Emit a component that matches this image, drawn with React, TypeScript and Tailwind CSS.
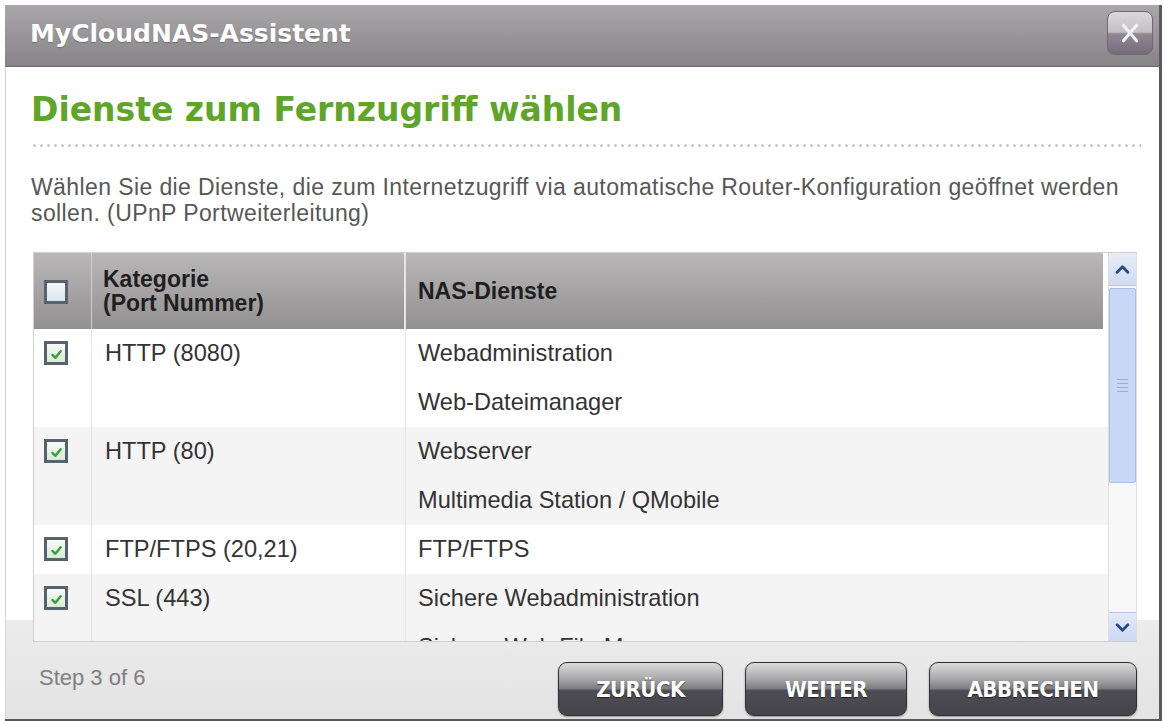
import type { ReactElement } from 'react';

const UI = { fontFamily: '"Liberation Sans", Arial, sans-serif' };
const HEAD = { fontFamily: '"DejaVu Sans", Verdana, sans-serif' };
const BTN = { fontFamily: '"Liberation Sans Narrow", "DejaVu Sans Condensed", "Liberation Sans", Arial, sans-serif' };

type Row = { cat: string; services: string[]; bg: string };

const ROWS: Row[] = [
  { cat: 'HTTP (8080)', services: ['Webadministration', 'Web-Dateimanager'], bg: 'bg-white' },
  { cat: 'HTTP (80)', services: ['Webserver', 'Multimedia Station / QMobile'], bg: 'bg-[#f4f4f4]' },
  { cat: 'FTP/FTPS (20,21)', services: ['FTP/FTPS'], bg: 'bg-white' },
  { cat: 'SSL (443)', services: ['Sichere Webadministration', 'Sichere Web File Manager'], bg: 'bg-[#f4f4f4]' },
];

function CheckBox({ checked }: { checked?: boolean }): ReactElement {
  return (
    <span
      className={`flex h-[24px] w-[24px] items-center justify-center border-[3px] border-[#56636d] ${
        checked ? 'bg-[linear-gradient(to_bottom,#f7fbf7,#d8ebd8)]' : 'bg-[linear-gradient(to_bottom,#f4f8fb,#dbe4ec)]'
      }`}
    >
      {checked && (
        <svg viewBox="0 0 14 14" className="mt-[2px] h-[13px] w-[13px]">
          <path d="M2.5 7.5 L5.8 10.5 L11.5 3.5" fill="none" stroke="#37a037" strokeWidth="2.6" strokeLinecap="round" strokeLinejoin="round" />
        </svg>
      )}
    </span>
  );
}

function NavButton({ label, width }: { label: string; width: string }): ReactElement {
  return (
    <button
      type="button"
      style={BTN}
      className={`${width} flex h-[54px] items-center justify-center rounded-[9px] border border-[#2f2f33] bg-[linear-gradient(to_bottom,#dcdcdc_0%,#a9a9ab_30%,#7c7c80_50%,#4d4d53_52%,#44444a_100%)] text-[22px] font-bold tracking-[-0.5px] text-white shadow-[0_1px_2px_rgba(0,0,0,0.35)] [text-shadow:0_1px_1px_rgba(0,0,0,0.6)]`}
    >
      {label}
    </button>
  );
}

function Chevron({ down }: { down?: boolean }): ReactElement {
  return (
    <svg viewBox="0 0 16 10" className="h-[9px] w-[15px]">
      <path d={down ? 'M2 2 L8 8 L14 2' : 'M2 8 L8 2 L14 8'} fill="none" stroke="#2e4a80" strokeWidth="3.2" strokeLinecap="round" strokeLinejoin="round" />
    </svg>
  );
}

export default function App(): ReactElement {
  return (
    <div className="h-[721px] w-[1165px] overflow-hidden bg-white" style={UI}>
      <div className="ml-[5px] mt-[5px] flex h-[716px] w-[1157px] flex-col border-r-[3px] border-b-2 border-[#5b595d]">
        {/* title bar */}
        <div className="flex h-[62px] shrink-0 items-center justify-between border-b border-[#6c6a6e] bg-[linear-gradient(to_bottom,#aaa7aa,#959296_60%,#878488)] pl-[25px] pr-[6px]">
          <span style={HEAD} className="pb-[4px] text-[25px] font-bold text-white [text-shadow:0_1px_1px_rgba(0,0,0,0.25)]">
            MyCloudNAS-Assistent
          </span>
          <span className="mb-[5px] flex h-[44px] w-[46px] items-center justify-center rounded-[8px] border border-[#6e6a72] bg-[linear-gradient(to_bottom,#dad8da_0%,#c2c0c3_48%,#8d8893_52%,#726d79_100%)]">
            <svg viewBox="0 0 20 20" className="h-[24px] w-[24px]">
              <path d="M4.5 3.5 L15.5 16.5 M15.5 3.5 L4.5 16.5" stroke="#f2f2f2" strokeWidth="2.6" strokeLinecap="round" />
            </svg>
          </span>
        </div>

        {/* body */}
        <div className="flex min-h-0 flex-1 flex-col border-l border-[#d4d4d4] bg-[linear-gradient(to_bottom,#ffffff_0px,#ffffff_553px,#ececec_553px,#e3e3e3_100%)]">
          <h1 style={HEAD} className="ml-[25px] mt-[23px] text-[33px] font-bold leading-[40px] text-[#5ea52a]">
            Dienste zum Fernzugriff wählen
          </h1>
          <div className="ml-[25px] mt-[14px] h-[3px] w-[1110px] bg-[radial-gradient(circle,#c6c6c6_1px,transparent_1.6px)] bg-[length:7px_3px]" />
          <p className="ml-[25px] mt-[27px] w-[1100px] text-[23px] leading-[26px] tracking-[0.4px] text-[#575757]">
            Wählen Sie die Dienste, die zum Internetzugriff via automatische Router-Konfiguration geöffnet werden sollen. (UPnP Portweiterleitung)
          </p>

          {/* table */}
          <div className="ml-[27px] mt-[26px] flex h-[390px] w-[1104px] shrink-0 border-l border-t border-b border-[#cfcfcf]">
            <div className="flex w-[1075px] flex-col overflow-hidden">
              <div className="flex h-[76px] shrink-0 bg-white pr-[5px]">
                <div className="flex flex-1 bg-[linear-gradient(to_bottom,#bab7b8,#a3a1a2_55%,#929092)] text-[23px] font-bold leading-[24px] text-[#1f1f1f]">
                  <div className="flex w-[58px] items-center border-r border-[#cfcdce] pl-[10px] pt-[2px]">
                    <CheckBox />
                  </div>
                  <div className="flex w-[314px] flex-col justify-center border-r-2 border-[#e6e6e6] pl-[11px]">
                    <span>Kategorie</span>
                    <span>(Port Nummer)</span>
                  </div>
                  <div className="flex flex-1 items-center pl-[12px]">NAS-Dienste</div>
                </div>
              </div>
              {ROWS.map((row) => (
                <div key={row.cat} className={`flex shrink-0 ${row.bg} text-[23.6px] text-[#333]`}>
                  <div className="w-[58px] border-r border-[#e4e4e4] pl-[10px] pt-[12px]">
                    <CheckBox checked />
                  </div>
                  <div className="w-[314px] border-r border-[#e4e4e4] pl-[13px]">
                    <div className="flex h-[49px] items-center">{row.cat}</div>
                  </div>
                  <div className="flex-1 pl-[12px]">
                    {row.services.map((s) => (
                      <div key={s} className="flex h-[49px] items-center">
                        {s}
                      </div>
                    ))}
                  </div>
                </div>
              ))}
            </div>

            {/* scrollbar */}
            <div className="flex w-[29px] flex-col border-x border-[#dedede] bg-[#f8f8f8]">
              <div className="flex h-[33px] shrink-0 items-center justify-center border-b border-[#b8c6e2] bg-[linear-gradient(to_bottom,#e8eef9,#cfdbf2)]">
                <Chevron />
              </div>
              <div className="mt-[2px] flex h-[195px] shrink-0 flex-col items-center justify-center gap-[3px] rounded-[2px] border border-[#aabee6] bg-[#c7d7f6]">
                <span className="h-px w-[11px] bg-[#98acd6]" />
                <span className="h-px w-[11px] bg-[#98acd6]" />
                <span className="h-px w-[11px] bg-[#98acd6]" />
                <span className="h-px w-[11px] bg-[#98acd6]" />
              </div>
              <div className="flex-1" />
              <div className="flex h-[29px] shrink-0 items-center justify-center border-t border-[#b8c6e2] bg-[linear-gradient(to_bottom,#e3eaf8,#ccd9f2)]">
                <Chevron down />
              </div>
            </div>
          </div>

          {/* footer */}
          <div className="flex flex-1 items-start justify-between pl-[33px] pr-[22px]">
            <span className="pt-[23px] text-[22px] leading-[26px] text-[#808080]">Step 3 of 6</span>
            <div className="mt-[20px] flex gap-[22px]">
              <NavButton label="ZURÜCK" width="w-[165px]" />
              <NavButton label="WEITER" width="w-[162px]" />
              <NavButton label="ABBRECHEN" width="w-[208px]" />
            </div>
          </div>
        </div>
      </div>
    </div>
  );
}
